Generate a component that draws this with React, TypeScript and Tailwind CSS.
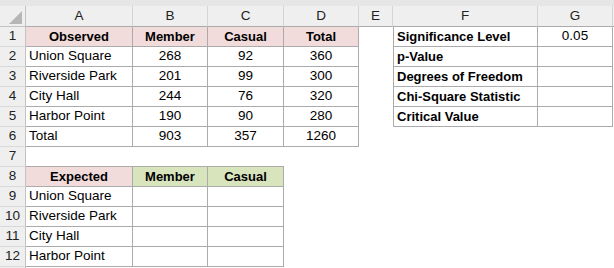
import clsx from "clsx";

type Cell = {
  t?: string;
  align?: "l" | "c";
  bold?: boolean;
  bg?: "pink" | "green";
  box?: boolean;
  left?: boolean;
  under?: boolean;
};

const grid = "grid grid-cols-[26px_107px_75px_76px_75px_34px_145px_75px_1fr]";

const rows: Cell[][] = [
  [
    { t: "Observed", align: "c", bold: true, bg: "pink", box: true },
    { t: "Member", align: "c", bold: true, bg: "pink", box: true },
    { t: "Casual", align: "c", bold: true, bg: "pink", box: true },
    { t: "Total", align: "c", bold: true, bg: "pink", box: true },
    {},
    { t: "Significance Level", bold: true, box: true, left: true },
    { t: "0.05", align: "c", box: true },
  ],
  [
    { t: "Union Square", box: true },
    { t: "268", align: "c", box: true },
    { t: "92", align: "c", box: true },
    { t: "360", align: "c", box: true },
    {},
    { t: "p-Value", bold: true, box: true, left: true },
    { box: true },
  ],
  [
    { t: "Riverside Park", box: true },
    { t: "201", align: "c", box: true },
    { t: "99", align: "c", box: true },
    { t: "300", align: "c", box: true },
    {},
    { t: "Degrees of Freedom", bold: true, box: true, left: true },
    { box: true },
  ],
  [
    { t: "City Hall", box: true },
    { t: "244", align: "c", box: true },
    { t: "76", align: "c", box: true },
    { t: "320", align: "c", box: true },
    {},
    { t: "Chi-Square Statistic", bold: true, box: true, left: true },
    { box: true },
  ],
  [
    { t: "Harbor Point", box: true },
    { t: "190", align: "c", box: true },
    { t: "90", align: "c", box: true },
    { t: "280", align: "c", box: true },
    {},
    { t: "Critical Value", bold: true, box: true, left: true },
    { box: true },
  ],
  [
    { t: "Total", box: true },
    { t: "903", align: "c", box: true },
    { t: "357", align: "c", box: true },
    { t: "1260", align: "c", box: true },
    {},
    {},
    {},
  ],
  [{ under: true }, { under: true }, { under: true }, {}, {}, {}, {}],
  [
    { t: "Expected", align: "c", bold: true, bg: "pink", box: true },
    { t: "Member", align: "c", bold: true, bg: "green", box: true },
    { t: "Casual", align: "c", bold: true, bg: "green", box: true },
    {},
    {},
    {},
    {},
  ],
  [{ t: "Union Square", box: true }, { box: true }, { box: true }, {}, {}, {}, {}],
  [{ t: "Riverside Park", box: true }, { box: true }, { box: true }, {}, {}, {}, {}],
  [{ t: "City Hall", box: true }, { box: true }, { box: true }, {}, {}, {}, {}],
  [{ t: "Harbor Point", box: true }, { box: true }, { box: true }, {}, {}, {}, {}],
  [{}, {}, {}, {}, {}, {}, {}],
];

function cellClass(c: Cell) {
  return clsx(
    "h-[20px] flex items-center overflow-hidden whitespace-nowrap text-black",
    c.align === "c" ? "justify-center" : "pl-[3px]",
    c.bold ? "font-bold text-[13px]" : "text-[13.5px]",
    c.bg === "pink" && "bg-[#f2dcdb]",
    c.bg === "green" && "bg-[#d8e4bc]",
    c.box && "border-r border-b border-[#ababab]",
    c.left && "border-l",
    c.under && "border-b border-[#ababab]"
  );
}

export default function App() {
  const letters = ["A", "B", "C", "D", "E", "F", "G"];
  return (
    <div className="w-[614px] h-[268px] overflow-hidden bg-white font-['Liberation_Sans',Arial,sans-serif]">
      <div className="h-[6px] bg-[#e6e6e6]" />
      <div className={grid + " h-[21px] bg-[#efefef] text-[13.5px] text-[#222]"}>
        <div className="relative border-r border-b border-[#c2c2c2]">
          <svg className="absolute left-[9px] top-[5px]" width="13" height="13" viewBox="0 0 13 13">
            <polygon points="13,0 13,13 0,13" fill="#b6b6b6" />
          </svg>
        </div>
        {letters.map((l) => (
          <div
            key={l}
            className="flex items-center justify-center border-r border-b border-r-[#d4d4d4] border-b-[#ababab]"
          >
            {l}
          </div>
        ))}
        <div className="border-b border-[#ababab]" />
      </div>
      {rows.map((r, i) => (
        <div key={i} className={grid}>
          <div className="h-[20px] flex items-center justify-center bg-[#efefef] text-[13.5px] text-[#222] border-r border-b border-r-[#c2c2c2] border-b-[#d9d9d9]">
            {i < 12 ? i + 1 : ""}
          </div>
          {r.map((c, j) => (
            <div key={j} className={cellClass(c)}>
              {c.t}
            </div>
          ))}
          <div />
        </div>
      ))}
    </div>
  );
}
